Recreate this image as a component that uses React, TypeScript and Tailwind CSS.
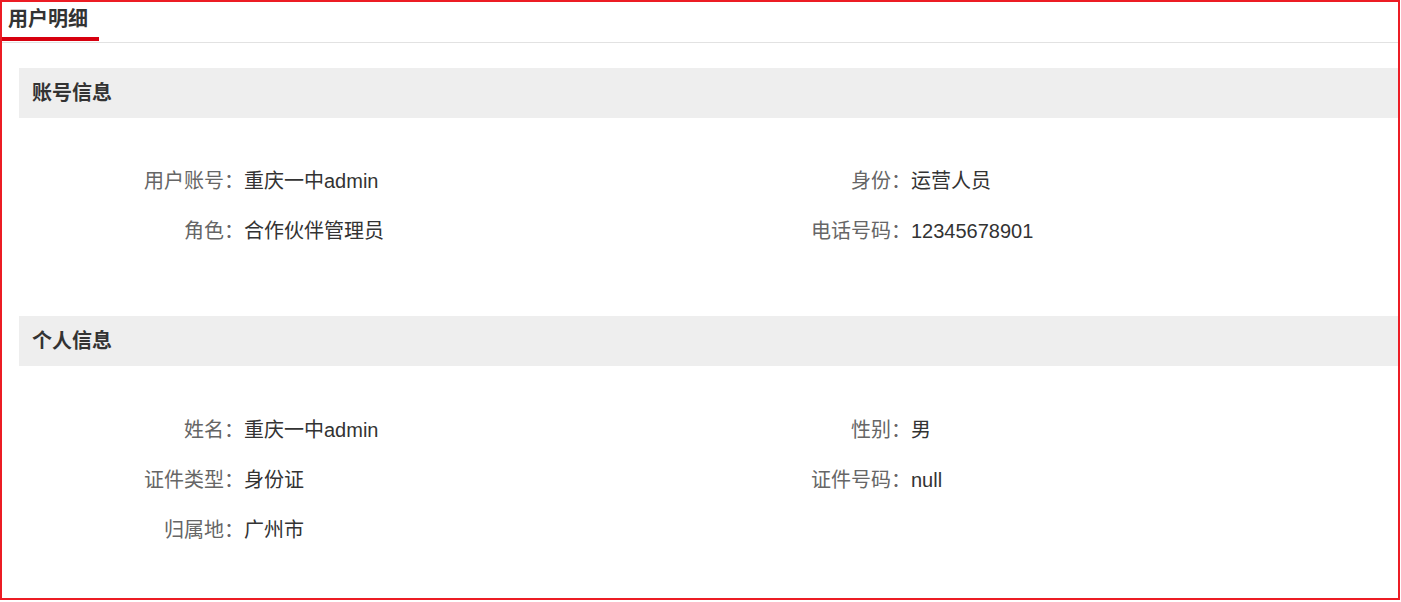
import React from "react";

const font = { fontFamily: '"Liberation Sans", Arial, "Noto Sans CJK SC", sans-serif' };

type Item = { label: string; value: string };

function Row({ left, right }: { left: Item; right?: Item }) {
  return (
    <div className="grid grid-cols-[667px_1fr] h-[50px] items-center">
      <div className="flex items-center">
        <div className="w-[225px] text-right text-[#666] shrink-0">{left.label}：</div>
        <div className="text-[#333]">{left.value}</div>
      </div>
      {right ? (
        <div className="flex items-center">
          <div className="w-[225px] text-right text-[#666] shrink-0">{right.label}：</div>
          <div className="text-[#333]">{right.value}</div>
        </div>
      ) : (
        <div />
      )}
    </div>
  );
}

function SectionHeader({ title }: { title: string }) {
  return (
    <div className="h-[50px] bg-[#eeeeee] flex items-center pl-[13px] font-bold text-[#333] text-[20px]">
      {title}
    </div>
  );
}

export default function App() {
  return (
    <div className="w-[1401px] h-[602px] bg-white" style={font}>
      <div className="w-[1400px] h-[600px] border-2 border-[#ec1c24] box-border flex flex-col text-[20px] leading-[24px]">
        <div className="h-[41px] border-b border-[#e2e2e2] flex">
          <div className="w-[97px] h-[39px] border-b-[4px] border-[#d7000f] pl-[6px] pt-[5px] font-bold text-[#333] box-border">
            用户明细
          </div>
        </div>
        <div className="pl-[17px] pt-[25px]">
          <SectionHeader title="账号信息" />
          <div className="pt-[38px] pb-[60px]">
            <Row left={{ label: "用户账号", value: "重庆一中admin" }} right={{ label: "身份", value: "运营人员" }} />
            <Row left={{ label: "角色", value: "合作伙伴管理员" }} right={{ label: "电话号码", value: "12345678901" }} />
          </div>
          <SectionHeader title="个人信息" />
          <div className="pt-[39px]">
            <Row left={{ label: "姓名", value: "重庆一中admin" }} right={{ label: "性别", value: "男" }} />
            <Row left={{ label: "证件类型", value: "身份证" }} right={{ label: "证件号码", value: "null" }} />
            <Row left={{ label: "归属地", value: "广州市" }} />
          </div>
        </div>
      </div>
    </div>
  );
}
